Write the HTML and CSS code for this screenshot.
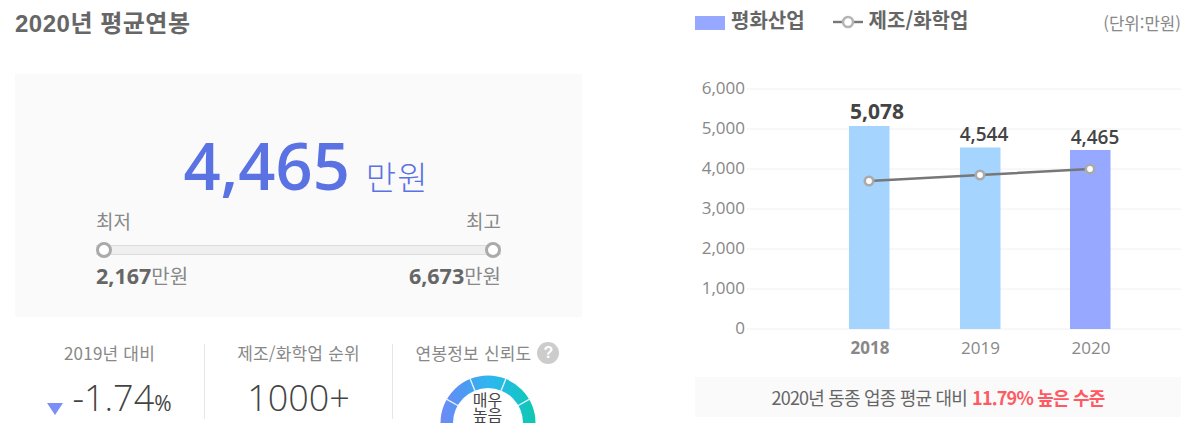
FILE: index.html
```html
<!DOCTYPE html>
<html lang="ko">
<head>
<meta charset="utf-8">
<title>2020년 평균연봉</title>
<link rel="stylesheet" href="styles.css">
</head>
<body>
<main class="page">
  <section class="left">
    <h1 class="title">2020년 평균연봉</h1>
    <div class="panel">
      <div class="amount"><span class="amount-num">4,465</span><span class="amount-unit">만원</span></div>
      <div class="range-labels"><span>최저</span><span>최고</span></div>
      <div class="track"><span class="knob"></span><span class="knob"></span></div>
      <div class="range-values">
        <span><b>2,167</b>만원</span>
        <span><b>6,673</b>만원</span>
      </div>
    </div>
    <div class="stats">
      <div class="stat">
        <div class="stat-label">2019년 대비</div>
        <div class="stat-value"><span class="down"></span><span class="num">-1.74</span><span class="pct">%</span></div>
      </div>
      <div class="stat">
        <div class="stat-label">제조/화학업 순위</div>
        <div class="stat-value"><span class="num">1000+</span></div>
      </div>
      <div class="stat">
        <div class="stat-label">연봉정보 신뢰도<span class="help">?</span></div>
        <div class="gauge">
          <svg class="gauge-svg" width="96" height="48" viewBox="0 0 96 48">
            <defs>
              <linearGradient id="gaugeFill" x1="0" y1="0" x2="1" y2="0">
                <stop offset="0" stop-color="#6f8af6"/>
                <stop offset="0.25" stop-color="#4d9af2"/>
                <stop offset="0.5" stop-color="#2fb6f0"/>
                <stop offset="0.75" stop-color="#1cc0d6"/>
                <stop offset="1" stop-color="#0fc8ae"/>
              </linearGradient>
            </defs>
            <path fill="url(#gaugeFill)" d="M0.5 48A47.5 47.5 0 0 1 95.5 48H83A35 35 0 0 0 13 48Z"/>
            <path class="gauge-gap" d="M18.6 31L6 23.8M35.25 16.5L29.8 3M60.75 16.5L66.2 3M77.4 31L90 23.8"/>
          </svg>
          <span class="gauge-text">매우<br>높음</span>
        </div>
      </div>
    </div>
  </section>

  <section class="right">
    <div class="legend">
      <span class="swatch"></span><span class="legend-name">평화산업</span>
      <svg class="legend-line" width="30" height="14" viewBox="0 0 30 14"><path d="M0 7H30" stroke="#777" stroke-width="2.4"/><circle cx="15" cy="7" r="5" fill="#fff" stroke="#b5b5b5" stroke-width="2.6"/></svg>
      <span class="legend-name">제조/화학업</span>
      <span class="unit">(단위:만원)</span>
    </div>
    <svg class="chart" width="486" height="310" viewBox="695 60 486 310">
      <g class="grid">
        <path d="M747 89H1181M747 129H1181M747 169H1181M747 209H1181M747 249H1181M747 289H1181M747 329H1181"/>
      </g>
      <g class="y-axis">
        <text x="745" y="94">6,000</text>
        <text x="745" y="134">5,000</text>
        <text x="745" y="174">4,000</text>
        <text x="745" y="214">3,000</text>
        <text x="745" y="254">2,000</text>
        <text x="745" y="294">1,000</text>
        <text x="745" y="334">0</text>
      </g>
      <rect class="bar" x="849" y="126" width="40.5" height="203"/>
      <rect class="bar" x="960" y="147.5" width="40.5" height="181.5"/>
      <rect class="bar bar-own" x="1070" y="150" width="40.5" height="179"/>
      <text class="val val-big" x="877" y="119">5,078</text>
      <text class="val" x="984" y="141">4,544</text>
      <text class="val" x="1095" y="144">4,465</text>
      <polyline class="line" points="869,181 980,175 1090,169"/>
      <circle class="pt" cx="869" cy="181" r="4.2"/>
      <circle class="pt" cx="980" cy="175" r="4.2"/>
      <circle class="pt" cx="1090" cy="169" r="4.2"/>
      <text class="x-label x-bold" x="870" y="354">2018</text>
      <text class="x-label" x="980.5" y="354">2019</text>
      <text class="x-label" x="1091" y="354">2020</text>
    </svg>
    <p class="note">2020년 동종 업종 평균 대비 <strong>11.79% 높은 수준</strong></p>
  </section>
</main>
</body>
</html>
```
FILE: styles.css
```css
* { box-sizing: border-box; }
html, body { margin: 0; padding: 0; background: #fff; }
body {
  width: 1190px;
  height: 433px;
  overflow: hidden;
  font-family: "Open Sans", "Noto Sans CJK KR", sans-serif;
  color: #666;
}
.page { display: flex; padding-left: 15px; height: 433px; }

/* left column */
.left { width: 567px; flex: none; }
.title {
  margin: 0;
  height: 74px;
  padding-top: 6px;
  font: 700 24px/36px "Liberation Sans", "Noto Sans CJK KR", sans-serif;
  letter-spacing: 0.5px;
  color: #666;
}
.panel {
  height: 243px;
  padding: 48px 81px 0;
  background: #fafafa;
}
.amount {
  display: flex;
  justify-content: center;
  align-items: baseline;
  height: 87px;
  padding-left: 15px;
  color: #5a72e2;
}
.amount-num { font-size: 65px; line-height: 86px; font-weight: 600; }
.amount-unit { font-size: 33px; margin-left: 16px; letter-spacing: 1px; font-family: "Noto Sans CJK KR", sans-serif; font-weight: 300; }
.range-labels {
  display: flex;
  justify-content: space-between;
  font: 400 19px/24px "Noto Sans CJK KR", sans-serif;
  color: #888;
}
.track {
  display: flex;
  justify-content: space-between;
  align-items: center;
  height: 10px;
  margin-top: 12px;
  background: #efefef;
  border-top: 1px solid #dcdcdc;
  border-bottom: 1px solid #dcdcdc;
}
.knob {
  width: 16px;
  height: 16px;
  border-radius: 50%;
  background: #fff;
  border: 3px solid #aaa;
}
.range-values {
  display: flex;
  justify-content: space-between;
  margin-top: 8px;
  font: 400 20px/26px "Noto Sans CJK KR", sans-serif;
  color: #888;
}
.range-values b { font: 700 21.5px/26px "Open Sans", sans-serif; color: #666; }

.stats { display: grid; grid-template-columns: 190px 188px 189px; margin-top: 27px; height: 79px; }
.stat { text-align: center; height: 75px; border-right: 1px solid #e6e6e6; }
.stat:last-child { border-right: 0; height: 79px; }
.stat-label {
  display: flex;
  justify-content: center;
  align-items: center;
  height: 18px;
  font: 400 17px/18px "Noto Sans CJK KR", sans-serif;
  letter-spacing: 0.2px;
  color: #888;
}
.stat-value {
  display: flex;
  justify-content: center;
  align-items: baseline;
  margin-top: 12px;
  color: #444;
}
.num { font-size: 36px; line-height: 48px; font-weight: 300; }
.pct { font-size: 21px; font-weight: 400; }
.down {
  width: 0;
  height: 0;
  margin-right: 9px;
  border-left: 8px solid transparent;
  border-right: 8px solid transparent;
  border-top: 12px solid #7b8ff7;
  align-self: flex-end;
  margin-bottom: 7px;
}
.help {
  width: 22px;
  height: 22px;
  margin-left: 6px;
  border-radius: 50%;
  background: #ccc;
  color: #fff;
  font: 700 16px/22px "Liberation Sans", sans-serif;
}
.gauge { position: relative; width: 96px; height: 48px; margin: 13px auto 0; overflow: hidden; }
.gauge-svg { display: block; }
.gauge-gap { stroke: #e4f2fb; stroke-width: 1.4; fill: none; }
.gauge-text {
  position: absolute;
  left: 0;
  right: 0;
  top: 17px;
  font: 400 16px/15px "Noto Sans CJK KR", sans-serif;
  color: #444;
}

/* right column */
.right { width: 486px; flex: none; margin-left: 113px; }
.legend {
  display: flex;
  align-items: center;
  height: 60px;
  padding-bottom: 20px;
}
.swatch { width: 30px; height: 14px; background: #96a8ff; margin-top: 6px; }
.legend-name {
  margin-left: 6px;
  font: 700 20px/24px "Noto Sans CJK KR", sans-serif;
  color: #666;
}
.legend-line { margin-left: 28px; margin-top: 4px; }
.unit {
  margin-left: auto;
  font: 400 16.8px/20px "Noto Sans CJK KR", sans-serif;
  color: #888;
  margin-top: 6px;
}
.chart { display: block; }
.grid path { stroke: #f0f0f0; stroke-width: 1; fill: none; }
.y-axis text { text-anchor: end; font-size: 17px; fill: #888; }
.bar { fill: #a5d4ff; }
.bar-own { fill: #96a8ff; }
.val { font-size: 19px; font-weight: 600; fill: #444; text-anchor: middle; }
.val-big { font-size: 21px; font-weight: 700; }
.line { fill: none; stroke: #777; stroke-width: 2.4; }
.pt { fill: #fff; stroke: #aaa; stroke-width: 2.6; }
.x-label { font-size: 17px; fill: #888; text-anchor: middle; }
.x-bold { font-weight: 700; }
.note {
  display: flex;
  justify-content: center;
  align-items: center;
  gap: 5px;
  margin: 7px 0 0;
  height: 40px;
  background: #fafafa;
  font: 400 18px/40px "Noto Sans CJK KR", sans-serif;
  letter-spacing: -0.8px;
  color: #666;
}
.note strong { font-weight: 700; color: #ff5a64; }
```
